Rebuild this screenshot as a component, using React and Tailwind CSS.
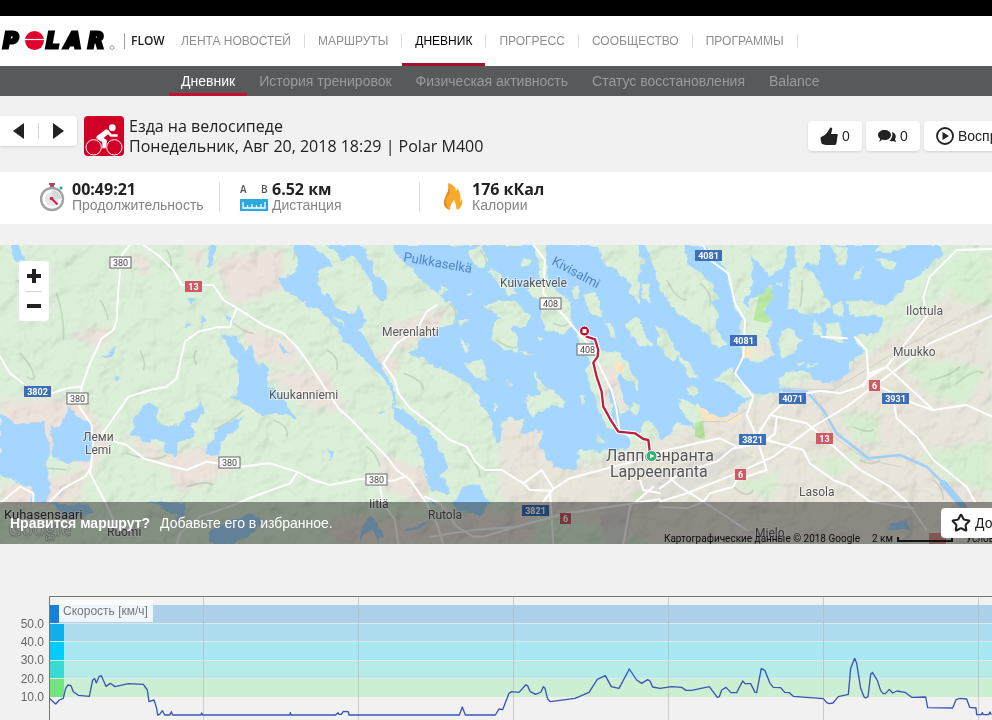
import React from 'react';
import { Star } from 'lucide-react';

const mainNav = ['ЛЕНТА НОВОСТЕЙ', 'МАРШРУТЫ', 'ДНЕВНИК', 'ПРОГРЕСС', 'СООБЩЕСТВО', 'ПРОГРАММЫ'];
const subNav = ['Дневник', 'История тренировок', 'Физическая активность', 'Статус восстановления', 'Balance'];

const Logo = () => (
    <svg viewBox="0 0 116 24" className="w-[116px] h-6" role="img" aria-label="Polar">
        <g fill="#000" stroke="#000" strokeWidth="3" fontFamily="DejaVu Sans" fontWeight="bold" fontStyle="italic" fontSize="21">
            <text x="3" y="19">P</text>
            <text x="46" y="19">L</text>
            <text x="65" y="19">A</text>
            <text x="88" y="19">R</text>
        </g>
        <circle cx="34.5" cy="11.5" r="9.5" fill="#e2012d" />
        <path d="M24 10.5h22" stroke="#fff" strokeWidth="1.2" />
        <circle cx="112" cy="18.5" r="2" fill="none" stroke="#777" strokeWidth="0.7" />
    </svg>
);

const Bike = () => (
    <svg viewBox="0 0 120 120" className="w-10 h-10 rounded-sm bg-[#d10027] shrink-0">
        <g fill="none" stroke="#fff" strokeWidth="3">
            <circle cx="29" cy="94" r="23" />
            <circle cx="91" cy="94" r="23" />
        </g>
        <circle cx="85" cy="35" r="10" fill="#fff" />
        <path d="M66 40 Q74 40 77 48 L83 55 H101 V62 H80 L72 55 L59 66 L68 72 Q70 75 68 80 L65 97 H55 V79 L38 68 Q35 64 39 60 Z" fill="#fff" />
    </svg>
);

const Thumb = () => (
    <svg viewBox="0 0 18 18" className="size-[18px]">
        <path d="M10 1C11 0 13 1 12 3L11 7H17C18 7 18 8 17.500 9L16.500 16C16 18 15 18 14 18H6C4 18 3 17 1.500 16.500C1 14 0 11 1 10C4 9 6 7 7.500 5Z" fill="#222" />
    </svg>
);

const Bubbles = () => (
    <svg viewBox="0 0 18 12" className="w-[18px] h-3">
        <path d="M14 2C17 3 19 6 17 9L18 12L14.500 11C13 11.500 12 11 11.500 10.500C14 9 15 5 14 2Z" fill="#222" />
        <path d="M6.500 0C10 0 13 2 13 5S10 10 6.500 10C5.500 10 5 10 4 9.500L1.500 12L2 8.500C1 8 0 6.500 0 5C0 2 3 0 6.500 0Z" fill="#222" />
    </svg>
);

const Stopwatch = () => (
    <svg viewBox="0 0 28 30" className="w-7 h-[30px] shrink-0">
        <path d="M9 1h6v2h-1v3h-4V3H9z" fill="#b5455c" />
        <path d="M19 6l2-2 2 2-2 2z" fill="#2aa7d8" />
        <circle cx="12" cy="17" r="11" fill="#fff" stroke="#a3a3a3" strokeWidth="2.4" />
        <path d="M12 8a9 9 0 0 1 9 9h-9z" fill="#cfd3d6" />
        <circle cx="12" cy="17" r="7" fill="#d9dbdd" opacity="0.7" />
        <path d="M11.5 16.5L17.5 22.5" stroke="#d51c4a" strokeWidth="2" />
        <circle cx="11.5" cy="16.5" r="1.8" fill="#d51c4a" />
    </svg>
);

const Ruler = () => (
    <svg viewBox="0 0 28 30" className="w-7 h-[30px] shrink-0">
        <g fill="#555" fontFamily="Open Sans" fontSize="10" fontWeight="600">
            <text x="0" y="11">A</text>
            <text x="21" y="11">B</text>
        </g>
        <rect x="0" y="17" width="28" height="12" fill="#2aa9df" />
        <path d="M3 20v6h22v-6M7.5 26v-3M12 26v-4M16.5 26v-3M21 26v-4" fill="none" stroke="#fff" strokeWidth="1.3" />
    </svg>
);

const Flame = () => (
    <svg viewBox="2 0 28 30" className="w-7 h-[30px] shrink-0">
        <path d="M10 1C17 3 18 7 18 9C19 8 19 7 19 6C23 11 23 16 22 20C24 18 24 16 24 15C25 21 24 26 19 28C18 26 18 22 16 18C15 21 12 22 12 28C7 26 5 22 7 17C8 13 12 9 10 1Z" fill="#f6a92c" />
        <path d="M10 1C13 8 12 12 9 16C7 20 8 24 12 28C5 26 5 20 7 16C8 12 12 9 10 1Z" fill="#e98a1e" />
        <path d="M16 18C18 22 18 26 17 28H13C12 23 15 21 16 18Z" fill="#fff" />
    </svg>
);

const stats = [
    { icon: <Stopwatch />, value: '00:49:21', label: 'Продолжительность' },
    { icon: <Ruler />, value: '6.52 км', label: 'Дистанция' },
    { icon: <Flame />, value: '176 кКал', label: 'Калории' },
];

// Map geometry is kept at 3 units per pixel
const lakes = `
M885 15L890 75L870 105L835 110L845 145L880 170L915 185L925 205L955 205L985 235L1025 280L1030 305L1060 325L1100 365L1140 405L1170 440L1185 490L1180 540L1230 570L1260 620L1275 690L1285 740L1300 750L1340 765L1350 745L1320 705L1345 680L1320 640L1290 570L1230 530L1190 500L1180 440L1140 370L1115 330L1100 295L1075 270L1100 245L1090 215L1070 195L1065 225L1030 215L1000 195L995 175L955 135L950 95L970 85L1000 75L960 35L935 15Z
M975 15L1000 30L1025 65L1060 45L1095 95L1115 125L1120 160L1140 180L1163 180L1160 145L1120 85L1095 35L1090 15Z
M1175 15L1195 45L1240 95L1290 145L1350 185L1370 220L1365 245L1320 260L1290 290L1255 300L1250 325L1220 335L1330 390L1380 410L1410 440L1440 480L1460 510L1480 560L1490 605L1505 600L1505 545L1535 530L1570 545L1565 580L1630 570L1620 620L1660 680L1730 690L1740 625L1810 635L1885 625L1890 595L1920 580L1930 540L1965 545L1980 600L2020 570L2040 540L2060 555L2090 570L2030 490L2100 500L2160 535L2200 520L2260 465L2330 458L2380 448L2340 445L2335 415L2370 395L2420 390L2440 420L2510 425L2550 395L2550 365L2595 335L2560 290L2600 285L2635 280L2650 235L2620 215L2660 195L2700 160L2720 125L2750 110L2795 75L2830 45L2825 15Z
M0 520L50 550L130 550L140 590L150 630L140 680L150 760L140 790L95 790L95 740L50 725L0 700Z
M150 560L180 560L205 500L235 530L275 560L275 620L270 660L220 670L160 655Z
M400 530L450 490L475 500L470 550L540 560L555 520L590 510L605 480L610 520L570 560L585 580L560 600L530 605L525 650L490 640L500 605L430 600L395 580Z
M735 530L690 545L640 575L640 600L610 640L655 650L670 600L720 550Z
M665 290L710 290L735 345L755 305L765 350L770 385L785 365L805 380L800 430L840 460L890 540L840 520L790 525L730 490L690 470L715 450L715 370Z
M840 310L865 340L845 345ZM300 350L355 315L330 350ZM560 170L590 180L570 190ZM605 215L620 240L605 245ZM560 250L585 255L560 258ZM680 220L700 235L690 260ZM345 410L360 415L345 430ZM980 630L1000 635L990 665Z
M30 15L55 15L75 50L75 65L45 60ZM630 15L650 15L635 80L620 80Z
M150 790L270 790L275 820L200 830ZM440 785L560 785L550 830L520 860L530 825ZM640 860L760 820L790 850L700 912L620 912Z
M1360 790L1390 745L1440 735L1470 790L1440 830L1370 810ZM1290 770L1310 800L1290 790ZM1110 820L1155 890L1130 900L1115 870L1080 905ZM1210 870L1290 840L1270 860L1215 875ZM1135 515L1155 512L1140 522Z
M2680 850L2720 840L2730 870L2660 870Z`;

const islands = `
M950 95L975 85L1000 100L1005 140L970 170ZM870 95L885 80L880 95ZM1000 225L1025 240L1035 260L1015 250Z
M1410 30L1450 18L1465 60L1455 90L1430 75L1405 45ZM1465 90L1490 95L1520 125L1550 160L1530 165L1490 120ZM1565 55L1595 60L1590 80L1565 75Z
M1610 15L1635 15L1640 60L1645 140L1700 170L1715 200L1715 250L1690 285L1640 270L1625 230L1630 190L1580 155L1600 130L1625 140Z
M1455 200L1490 180L1550 190L1590 230L1580 260L1530 260L1550 300L1555 338L1500 320L1470 295L1480 265L1500 235ZM1555 335L1600 342L1575 346Z
M1790 15L1910 15L1930 60L1910 120L1870 110L1810 70ZM1750 165L1790 155L1805 230L1780 230L1755 200ZM1715 140L1735 140L1740 175L1720 170Z
M1730 290L1745 270L1795 330L1860 340L1910 420L1915 450L1860 400L1850 420L1890 510L1860 520L1830 430L1830 490L1860 580L1820 560L1795 505L1770 430L1755 390L1775 370L1750 330Z
M1395 365L1445 360L1465 420L1420 415ZM1580 460L1620 470L1600 400L1640 440L1690 480L1695 500L1630 500L1600 530L1585 510ZM1815 235L1840 260L1855 300L1835 290ZM1515 420L1540 430L1530 440ZM1895 490L1920 495L1915 530L1895 515Z
M1880 100L1920 130L1915 190L1890 160ZM1320 135L1345 150L1320 165ZM1375 240L1405 240L1380 255ZM1380 290L1410 320L1405 335L1385 310ZM1400 155L1420 155L1410 165ZM1520 130L1545 135L1530 140ZM1610 290L1635 295L1620 305ZM1740 465L1760 470L1745 490ZM1790 590L1815 605L1800 610ZM1480 490L1492 500L1482 520ZM1600 390L1615 400L1605 410Z
M1935 15L1970 105L1980 155L2030 215L2100 265L2160 325L2180 315L2150 275L2150 215L2130 185L2160 175L2130 125L2070 75L2050 15Z
M2110 15L2160 65L2180 95L2200 185L2225 235L2215 305L2230 355L2280 365L2320 345L2315 305L2290 285L2320 245L2290 215L2320 165L2320 135L2280 155L2250 175L2245 200L2230 190L2260 135L2260 75L2250 45L2310 105L2350 85L2365 15Z
M2370 95L2400 75L2450 110L2470 165L2495 195L2470 220L2405 220L2365 205ZM2380 15L2460 15L2460 75L2420 65L2405 105L2380 55ZM2490 15L2540 20L2535 75L2510 65ZM2620 35L2690 35L2720 15L2640 15ZM2630 55L2690 65L2680 95L2650 75ZM2570 95L2585 85L2580 115L2565 115ZM2500 195L2525 185L2530 225L2510 225ZM2540 185L2580 180L2660 195L2650 215L2580 230L2550 220Z
M2435 285L2450 235L2465 285ZM2475 255L2520 250L2530 315L2480 295ZM2340 275L2370 260L2405 305L2380 335L2350 360L2335 315Z
M1875 245L1920 235L1930 275L1960 320L1920 315L1890 285ZM1970 255L2000 275L2035 345L2020 365L1975 315ZM2135 415L2180 395L2195 375L2205 415L2230 435L2280 470L2230 470L2190 440ZM2030 350L2050 355L2100 415L2070 410ZM2060 445L2090 440L2100 465L2070 465ZM2030 475L2100 495L2110 515L2060 505ZM1925 125L1945 135L1950 185L1930 175ZM1890 135L1920 165L1920 195L1895 165ZM2330 130L2350 125L2345 138ZM2390 365L2410 370L2395 378ZM2420 370L2450 378L2430 382Z`;

const roads = `
M390 15L365 45L355 150L350 240L340 270L305 295L270 370L245 440L238 500L275 555L280 620L270 700L315 785L345 850
M430 15L480 50L520 90L545 135L640 135L670 180L720 210L790 255L850 280L890 320L930 375L985 460L1020 510L1055 540L1110 600L1160 650L1190 690L1230 720L1280 790L1310 850L1330 912
M710 205L695 240L690 262L650 262L595 275L555 305L540 370L530 415L500 440L450 450L385 470L350 520L315 570L290 600
M0 350L30 400L70 430M155 460L200 445L240 440
M345 605L380 615L430 655L500 675L560 690L620 665L720 680L810 670L890 695L940 720L990 735L1080 717L1180 722L1220 708
M890 700L870 730L760 770L690 800L600 830L540 880L530 912
M275 680L255 710L190 745L150 785M0 790L60 740L100 760L100 785
M1310 195L1280 215L1250 270L1190 310L1150 370L1185 420L1195 460L1230 505L1290 550L1350 600L1400 620L1425 665L1455 690L1505 690L1570 730L1625 690L1660 745M1570 730L1590 750L1655 752L1630 785M1655 750L1710 715L1840 680L1980 645
M1600 15L1635 60L1630 160L1690 225L1740 285L1780 330L1800 380L1835 450L1850 510L1858 570L1890 590
M1140 740L1150 790L1185 840L1195 912M1275 770L1320 790L1370 860L1420 890L1450 890L1550 860L1700 820L1980 778M1290 890L1420 870L1550 860M1650 750L1660 912
M2110 15L2130 60L2185 100L2205 190L2235 240L2230 350L2205 400L2260 470L2240 525L2270 590L2300 690
M1980 635L2080 612L2160 595L2210 620L2310 600M1980 785L2060 760L2210 700L2320 650L2440 560L2540 500L2620 440L2740 350L2790 310L2976 228
M2270 590L2310 525L2420 550L2490 610L2580 690L2670 740L2720 785L2780 870M2310 525L2350 490M2420 460L2460 452L2520 460L2580 440L2610 410L2660 380L2800 510L2900 495L2976 530M2330 535L2325 580L2290 610L2200 625L2150 665L2040 700L1980 745
M2565 292L2600 330L2605 410M2660 380L2700 330L2780 230L2770 170L2790 110L2830 70L2870 30L2976 27M2465 290L2540 295M2660 380L2610 400L2590 440
M2680 480L2690 535L2750 590L2800 660L2900 740L2925 785M2640 440L2740 490L2800 510
M2300 600L2410 630L2430 670L2500 720L2550 740L2610 785L2740 805M2010 715L2040 740L2110 785L2240 870M1920 720L1930 750L1980 760M1960 740L1890 800L1870 912M1980 800L2060 805L2110 785L2130 760L2200 740L2210 720L2300 690`;

const relief = `M60 340q30 30 40 60t-20 10M500 30q20 30 10 60M300 180q20 30 25 60M420 330q20 40 10 60M590 330q-15 20 0 45M470 540q30 40 60 10M640 570q50-20 90-60M170 160q25 80 20 140M880 60q10-30 5-50M980 330q40 20 30 60M1350 190q30 30 10 60M1440 30q25 30 20 50M1660 250q40 20 50-10M1490 300q40 30 60 20M1400 640q40 40 40 70M2100 130q40 30 30 70M2000 120q30 60 60 60M2400 200q10-50 5-80M2790 420q60-10 90-40M2870 430q60-50 80-30M2560 560q40 20 60 10M2200 740q40 40 60 10M2800 720q30 20 30 60M2580 660q40 20 60 0M380 640q80 30 120 5M560 740q60-20 80-5M90 690q60-10 110 0M820 540q50 20 40 50M1210 400q60 20 60 50M1100 620q30 20 40 60M700 250q40 30 60 30M50 120q60 50 50 70`;

const places = [
    ['Kuivaketvele', 500, 287], ['Merenlahti', 382, 336], ['Kuukanniemi', 269, 399], ['Леми', 83, 441], ['Lemi', 85, 454],
    ['Ilottula', 906, 315], ['Muukko', 893, 356], ['Lasola', 799, 496], ['Iitiä', 369, 508], ['Rutola', 428, 519], ['Ruomi', 107, 536], ['Mielo', 755, 537],
];

const shields = [
    ['380', 110, 257, 'local'], ['380', 67, 393, 'local'], ['380', 219, 457, 'local'], ['380', 366, 474, 'local'], ['408', 540, 298, 'local'], ['408', 577, 344, 'local'],
    ['3802', 24, 386, 'blue'], ['4081', 695, 250, 'blue'], ['4081', 730, 335, 'blue'], ['4071', 779, 393, 'blue'], ['3931', 882, 393, 'blue'], ['3821', 739, 434, 'blue'], ['3821', 522, 505, 'blue'],
    ['13', 185, 281, 'red'], ['13', 816, 433, 'red'], ['6', 869, 380, 'red'], ['6', 735, 469, 'red'], ['6', 560, 513, 'red'],
];

const shieldLook = {
    local: { w: 21, fill: '#fff', stroke: '#666', text: '#444', weight: 400 },
    blue: { w: 27, fill: '#3c6fb8', stroke: 'none', text: '#fff', weight: 700 },
    red: { w: 17, fill: '#cd5a64', stroke: 'none', text: '#fff', weight: 700 },
};

const Shield = ({ label, x, y, kind }) => {
    const look = shieldLook[kind];
    const w = label.length === 1 ? 11 : look.w;
    return (
        <g>
            <rect x={x} y={y} width={w} height="11" fill={look.fill} stroke={look.stroke} />
            <text x={x + w / 2} y={y + 9} fill={look.text} fontSize="9" fontWeight={look.weight} textAnchor="middle">{label}</text>
        </g>
    );
};

const RouteMap = () => (
    <svg viewBox="0 245 992 299" preserveAspectRatio="xMinYMin slice" className="block w-full h-[299px]" fontFamily="Roboto, sans-serif">
        <defs>
            <filter id="coast" x="0" y="0" width="100%" height="100%">
                <feTurbulence type="fractalNoise" baseFrequency="0.1" numOctaves="3" seed="4" result="n" />
                <feDisplacementMap in="SourceGraphic" in2="n" scale="8" xChannelSelector="R" yChannelSelector="G" />
            </filter>
            <filter id="soft"><feGaussianBlur stdDeviation="10" /></filter>
            <filter id="hills" x="0" y="0" width="100%" height="100%">
                <feTurbulence type="fractalNoise" baseFrequency="0.045" numOctaves="3" seed="11" />
                <feColorMatrix values="0 0 0 0 0  0 0 0 0 0  0 0 0 0 0  1 0 0 0 0" />
                <feDiffuseLighting surfaceScale="5" diffuseConstant="1.13" lightingColor="#fff">
                    <feDistantLight azimuth="225" elevation="62" />
                </feDiffuseLighting>
            </filter>
            <mask id="water" maskUnits="userSpaceOnUse" x="0" y="245" width="992" height="299">
                <g filter="url(#coast)">
                    <rect x="0" y="245" width="992" height="299" fill="#000" />
                    <g transform="translate(0 240) scale(0.33333)">
                        <path d={lakes} fill="#fff" />
                        <path d={islands} fill="#000" />
                    </g>
                </g>
            </mask>
        </defs>

        {/* Terrain */}
        <rect x="0" y="245" width="992" height="299" fill="#dcf0d9" />
        <g transform="translate(0 240) scale(0.33333)">
            <g fill="#ebe3dc" filter="url(#soft)">
                <path d="M1500 540L1640 560L1700 690L1900 620L2300 470L2600 350L2976 60V912H2000L1500 780Z" opacity="0.85" />
                <path d="M0 480L240 470L330 600L280 700L160 640L0 560ZM480 650L620 620L700 690L540 760ZM800 400L980 390L1040 520L920 500ZM640 60L850 20L850 150L700 200ZM0 740L260 690L240 790L0 800ZM560 30L620 20L600 90ZM380 40L450 50L440 120ZM1150 260L1350 200L1300 280L1200 330ZM1100 330L1200 360L1180 420ZM1140 640L1300 700L1260 800L1150 740ZM360 580L480 620L470 680ZM1000 830L1300 840L1600 800V912H1000ZM720 260L880 300L900 380L760 360ZM200 280L340 260L300 330ZM1800 370L1860 400L1880 520L1820 500ZM2230 310L2320 300L2300 360Z" />
            </g>
            <g fill="#d6efd2" filter="url(#soft)" opacity="0.9">
                <path d="M2700 350L2960 380L2900 500L2780 460ZM2520 520L2640 520L2640 620L2560 600ZM2200 730L2340 700L2320 780ZM2440 660L2600 640L2500 720ZM2760 640L2976 600V760L2840 720ZM2850 60L2976 60V200L2860 180Z" />
            </g>
            <path d="M2280 155L2315 140L2322 180L2290 210L2320 235L2300 250L2260 240ZM2085 550L2110 540L2115 600L2085 590ZM1895 765L1920 745L1935 765L1910 785Z" fill="#b9e8a3" />
            <path d="M2095 505L2130 500L2190 530L2150 545L2110 540ZM2225 335L2255 325L2260 350L2230 365ZM1840 360L1870 375L1875 400L1845 390ZM2170 545L2230 520L2200 550Z" fill="#fbe6c4" />
            <path d="M1800 830L1960 700L2200 620L2260 650L2050 760L1900 800L1880 912H1820Z" fill="#dcdad6" opacity="0.7" />
            <path d={relief} fill="none" stroke="#9fb39a" strokeWidth="5" opacity="0.4" />
        </g>
        <rect x="0" y="245" width="992" height="299" filter="url(#hills)" className="mix-blend-multiply" opacity="0.3" />
        <rect x="0" y="245" width="992" height="299" fill="#a5d6ff" mask="url(#water)" />

        {/* Canal, roads and the recorded route */}
        <g transform="translate(0 240) scale(0.33333)" fill="none" strokeLinejoin="round" strokeLinecap="round">
            <path d="M2350 452L2420 455L2470 510L2510 580L2605 655L2700 645L2780 680L2830 730" stroke="#a0cff7" strokeWidth="8" />
            <path d="M2830 730L2890 800" stroke="#a0cff7" strokeWidth="20" />
            <path d="M2440 460L2500 590L2600 660L2700 680M2340 445L2500 450L2680 340L2860 240M2100 545L2180 545L2240 510" stroke="#cfcfca" strokeWidth="3" />
            <path d={roads} stroke="#fff" strokeWidth="6" />
        </g>
        {shields.map(([label, x, y, kind]) => <Shield key={label + x} label={label} x={x} y={y} kind={kind} />)}
        <g fill="#565656" stroke="#fff" strokeWidth="2" strokeOpacity="0.5" paintOrder="stroke" fontSize="12">
            {places.map(([name, x, y]) => <text key={name} x={x} y={y}>{name}</text>)}
            <text x="606" y="461" fontSize="16">Лаппеенранта</text>
            <text x="610" y="477" fontSize="16">Lappeenranta</text>
            <text x="4" y="519" fontSize="13" fill="#333">Kuhasensaari</text>
        </g>
        <g fill="#4f83c4" fontSize="13">
            <text transform="translate(403 261) rotate(10)">Pulkkaselkä</text>
            <text transform="translate(551 264) rotate(28)">Kivisalmi</text>
        </g>
        <g transform="translate(0 240) scale(0.33333)" fill="none" strokeLinejoin="round" strokeLinecap="round">
            <path d="M1760 290L1785 298L1795 330L1793 350L1780 368L1790 410L1805 455L1810 500L1835 545L1855 575L1905 580L1930 597L1945 600L1950 640" stroke="#fff" strokeWidth="14" />
            <path d="M1760 290L1785 298L1795 330L1793 350L1780 368L1790 410L1805 455L1810 500L1835 545L1855 575L1905 580L1930 597L1945 600L1950 640" stroke="#bb1f3e" strokeWidth="7" />
        </g>
        <circle cx="584.5" cy="331" r="5" fill="#c00a2e" stroke="#fff" />
        <rect x="582.5" y="329" width="4" height="4" fill="#fff" />
        <circle cx="651.5" cy="456" r="5.5" fill="#2fb573" stroke="#fff" />
        <path d="M650 453.5L654.5 456L650 458.5Z" fill="#fff" />

        {/* Google attribution */}
        <text x="8" y="536" fontFamily="Open Sans" fontSize="19" fontWeight="600" fill="#fff" fillOpacity="0.5" stroke="#888" strokeWidth="0.5">Google</text>
        <rect x="929" y="533" width="17" height="11" fill="#cd5a64" opacity="0.6" />
        <g fill="#111" fontSize="10">
            <text x="664" y="542">Картографические данные © 2018 Google</text>
            <text x="872" y="542">2 км</text>
            <text x="966" y="542">Условия использования</text>
        </g>
        <path d="M898 537v4h54v-4" fill="none" stroke="#222" strokeWidth="2" />
    </svg>
);

const bands = [
    { y: 9, h: 18, soft: '#add0ea', strong: '#1582de', w: 9 },
    { y: 28, h: 17, soft: '#addcee', strong: '#0fb0e8', w: 14 },
    { y: 46, h: 18, soft: '#a9e8f3', strong: '#02cdfa', w: 14 },
    { y: 65, h: 17, soft: '#b6ebe8', strong: '#37dbd4', w: 14 },
    { y: 83, h: 18, soft: '#ccefd3', strong: '#72e482', w: 14 },
];
const ticks = [['50.0', 32], ['40.0', 50], ['30.0', 68], ['20.0', 87], ['10.0', 105]];

const speed = 'M148 355L167 372L178 360L190 355L197 325L204 315L213 317L220 335L235 346L268 349L278 300L284 296L289 309L297 290L304 287L318 319L331 310L345 320L385 311L430 313L442 330L447 365L462 360L470 385L473 405L479 403L487 392L494 405L510 405L514 395L518 405L603 405L605 399L608 405L869 405L871 398L873 405L1007 405L1014 398L1017 403L1024 403L1030 394L1045 395L1047 405L1378 405L1387 381L1396 405L1486 405L1497 387L1508 389L1527 340L1535 335L1557 337L1577 315L1583 317L1590 334L1607 343L1623 336L1630 320L1635 325L1643 357L1651 365L1725 355L1767 337L1792 298L1816 287L1834 320L1857 325L1888 267L1910 300L1925 310L1943 299L1950 303L1958 321L1980 325L2015 320L2045 322L2058 331L2075 331L2128 320L2152 352L2158 350L2165 330L2178 322L2193 338L2210 338L2228 303L2235 311L2252 311L2265 337L2270 338L2284 265L2295 272L2310 310L2320 322L2342 323L2354 337L2368 338L2380 349L2470 356L2480 368L2488 371L2499 369L2515 350L2545 343L2552 265L2564 235L2570 250L2582 325L2592 350L2597 354L2604 350L2612 283L2617 277L2632 301L2642 332L2650 341L2656 341L2668 328L2678 339L2691 333L2715 337L2735 352L2777 351L2783 383L2858 384L2868 359L2880 355L2900 357L2909 382L2928 384L2930 404L2944 404L2947 398L2950 404L2966 404L2970 396L2974 404';

const SpeedChart = () => (
    <svg viewBox="0 0 992 124" preserveAspectRatio="xMinYMin slice" className="block w-full h-[124px]" fontFamily="Liberation Sans, sans-serif" fontSize="12">
        {bands.map(b => <rect key={b.y} x="49" y={b.y} width="943" height={b.h} fill={b.soft} />)}
        {[27.5, 45.5, 64.5, 82.5].map(y => <path key={y} d={`M49 ${y}H992`} stroke="#dceaea" />)}
        {[203.5, 358.5, 513.5, 668.5, 823.5, 978.5].map(x => <path key={x} d={`M${x} 0V124`} stroke="#b4bcc0" strokeOpacity="0.7" />)}
        {bands.map(b => <rect key={b.y} x="49" y={b.y} width={b.w + 1} height={b.h} fill={b.strong} />)}
        <path d="M49.5 124V0.5H992" fill="none" stroke="#77796f" />
        <path d={speed} transform="translate(0 -16) scale(0.33333)" fill="none" stroke="#3a55b4" strokeWidth="4" strokeLinejoin="round" />
        <rect x="59" y="4" width="94" height="22" fill="#fff" fillOpacity="0.8" />
        <text x="63" y="19" fill="#777">Скорость [км/ч]</text>
        {ticks.map(([t, y]) => <text key={t} x="44" y={y} textAnchor="end" fill="#666">{t}</text>)}
    </svg>
);

const App = () => (
    <div className="min-h-screen overflow-hidden bg-[#f1f1f1] font-['Liberation_Sans',sans-serif] text-sm text-[#222]">
        <div className="h-4 bg-black" />

        {/* Main navigation */}
        <header className="h-[50px] bg-white flex items-center">
            <div className="w-[168px] shrink-0 flex items-center">
                <Logo />
                <span className="ml-2 w-px h-4 bg-gray-400" />
                <a href="#flow" className="ml-1.5 font-['Open_Sans'] font-semibold text-xs">FLOW</a>
            </div>
            <nav className="h-full flex items-center text-xs">
                {mainNav.map(item => (
                    <React.Fragment key={item}>
                        <a href="#nav" className={`h-full px-[13px] flex items-center whitespace-nowrap border-y-3 border-t-transparent ${item === 'ДНЕВНИК' ? 'text-black border-b-[#a6122f]' : 'text-[#8e8e8e] border-b-transparent'}`}>{item}</a>
                        <span className="w-px h-3.5 bg-[#dcdcdc]" />
                    </React.Fragment>
                ))}
            </nav>
        </header>
        <nav className="h-[30px] bg-[#58595b] pl-[169px] flex">
            {subNav.map((item, i) => (
                <a key={item} href="#sub" className={`px-3 flex items-center whitespace-nowrap border-y-3 border-t-transparent ${i === 0 ? 'text-white border-b-[#c8102e]' : 'text-[#9a9b9d] border-b-transparent'}`}>{item}</a>
            ))}
        </nav>

        {/* Session title */}
        <div className="h-[76px] min-w-[1072px] flex items-center">
            <div className="h-[30px] w-[77px] mb-1.5 bg-white rounded-r-sm shadow flex items-center justify-center gap-3.5 shrink-0">
                <button aria-label="Назад"><svg viewBox="0 0 11 16" className="w-[11px] h-4"><path d="M11 0V16L0 8z" fill="#222" /></svg></button>
                <span className="w-px h-4 bg-gray-300" />
                <button aria-label="Вперёд"><svg viewBox="0 0 11 16" className="w-[11px] h-4"><path d="M0 0V16L11 8z" fill="#222" /></svg></button>
            </div>
            <div className="ml-[7px] mt-1 flex items-center gap-[5px]">
                <Bike />
                <h1 className="font-['Open_Sans'] text-base leading-5 whitespace-nowrap">
                    Езда на велосипеде<br />Понедельник, Авг 20, 2018 18:29 | Polar M400
                </h1>
            </div>
            <div className="ml-auto mt-1 flex gap-1">
                <button className="w-[54px] h-[30px] bg-white rounded-sm shadow flex items-center justify-center gap-1"><Thumb />0</button>
                <button className="w-[54px] h-[30px] bg-white rounded-sm shadow flex items-center justify-center gap-1"><Bubbles />0</button>
                <button className="w-[148px] h-[30px] pl-3 bg-white rounded-sm shadow flex items-center gap-1">
                    <svg viewBox="0 0 18 18" className="size-[18px]"><circle cx="9" cy="9" r="8" fill="none" stroke="#222" strokeWidth="1.8" /><path d="M6.5 5v8l6.5-4z" fill="#222" /></svg>
                    Воспроизвести
                </button>
            </div>
        </div>

        {/* Totals */}
        <ul className="h-[52px] pl-5 pb-0.5 bg-white flex items-center">
            {stats.map((s, i) => (
                <li key={s.label} className={`w-[200px] h-[30px] pl-5 flex items-center gap-1 ${i < 2 ? 'border-r border-[#dcdcdc]' : ''}`}>
                    {s.icon}
                    <div>
                        <p className="font-['Open_Sans'] font-bold text-base leading-4">{s.value}</p>
                        <p className="leading-4 text-[#858585]">{s.label}</p>
                    </div>
                </li>
            ))}
        </ul>

        {/* Map */}
        <section className="relative mt-[21px] overflow-hidden">
            <RouteMap />
            <div className="absolute left-[19px] top-4 w-[30px] h-[60px] bg-white rounded-sm flex flex-col items-center">
                <button aria-label="Увеличить" className="flex-1"><svg viewBox="0 0 14 14" className="size-3.5"><path d="M7 0v14M0 7h14" stroke="#222" strokeWidth="4" /></svg></button>
                <span className="w-4 h-px bg-gray-300" />
                <button aria-label="Уменьшить" className="flex-1"><svg viewBox="0 0 14 14" className="size-3.5"><path d="M0 7h14" stroke="#222" strokeWidth="4" /></svg></button>
            </div>
            <div className="absolute left-0 bottom-0 w-full h-[42px] pl-2.5 bg-black/40 text-white flex items-center">
                <b>Нравится маршрут?</b>
                <span className="ml-2.5">Добавьте его в избранное.</span>
                <button className="ml-auto -mr-[60px] w-[111px] h-[30px] pl-2.5 bg-white text-[#222] rounded-sm flex items-center gap-1">
                    <Star size={20} strokeWidth={2.5} />
                    Добавить
                </button>
            </div>
        </section>

        {/* Speed chart */}
        <section className="mt-[52px]">
            <SpeedChart />
        </section>
    </div>
);

export default App;
